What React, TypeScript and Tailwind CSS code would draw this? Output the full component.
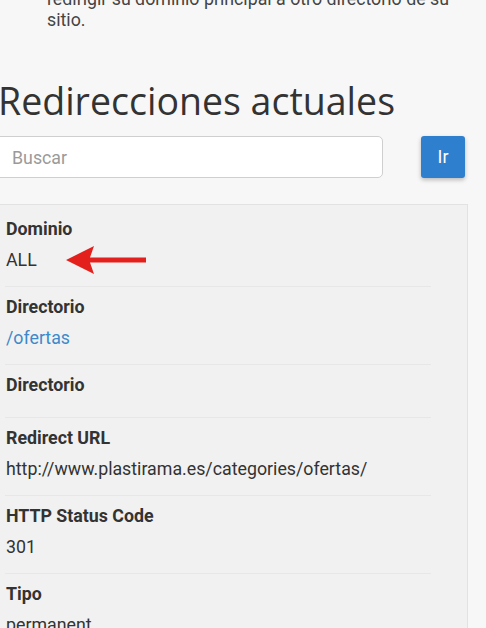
const fields: { label: string; value?: string; link?: boolean }[] = [
  { label: "Dominio", value: "ALL" },
  { label: "Directorio", value: "/ofertas", link: true },
  { label: "Directorio" },
  { label: "Redirect URL", value: "http://www.plastirama.es/categories/ofertas/" },
  { label: "HTTP Status Code", value: "301" },
  { label: "Tipo", value: "permanent" },
];

function Arrow() {
  return (
    <svg width="84" height="30" viewBox="0 0 84 30" className="absolute left-[58px] top-[-4px]">
      <polygon points="2,15 30,1 26,12.5 82,12.5 82,17.5 26,17.5 30,29" fill="#e3201b" />
    </svg>
  );
}

export default function App() {
  return (
    <div className="min-h-screen w-[486px] overflow-hidden bg-[#f7f7f7] font-['Roboto',sans-serif] text-[#333]">
      {/* intro text, cut off at the top */}
      <p className="-mt-[12px] pl-[47px] pr-[20px] text-[17.8px] leading-[21px] text-[#444]">
        redirigir su dominio principal a otro directorio de su sitio.
      </p>

      <h2 className="-ml-[2px] mt-[49px] whitespace-nowrap font-['Open_Sans',sans-serif] text-[37.5px] leading-[44px] text-[#333]">
        Redirecciones actuales
      </h2>

      <div className="mt-[13px] flex items-center">
        <input
          className="-ml-[10px] h-[42px] w-[393px] rounded-[5px] border border-[#cfcfcf] bg-white px-[21px] text-[17.8px] text-[#333] outline-none placeholder:text-[#9a9a9a]"
          placeholder="Buscar"
        />
        <button className="ml-[38px] h-[42px] w-[44px] rounded-[3px] bg-[#2f7fcf] text-[17.8px] text-white shadow-[0_2px_4px_rgba(0,0,0,0.25)]">
          Ir
        </button>
      </div>

      <div className="mt-[26px] w-[468px] border-t border-r border-[#e2e2e2] bg-[#f1f1f1] pt-[4px]">
        <div className="ml-[5px] w-[426px]">
          {fields.map((f, i) => (
            <div key={i} className="border-b border-[#e7e7e7] pl-[1px] pt-[9px] pb-[15px]">
              <div className="text-[17.8px] font-bold leading-[22px] text-[#333]">{f.label}</div>
              {f.value ? (
                <div className="relative mt-[9px] whitespace-nowrap text-[17.8px] leading-[22px]">
                  <span className={f.link ? "text-[#3d89c9]" : "text-[#333]"}>{f.value}</span>
                  {i === 0 && <Arrow />}
                </div>
              ) : (
                <div className="mt-[6px]" />
              )}
            </div>
          ))}
        </div>
      </div>
    </div>
  );
}
